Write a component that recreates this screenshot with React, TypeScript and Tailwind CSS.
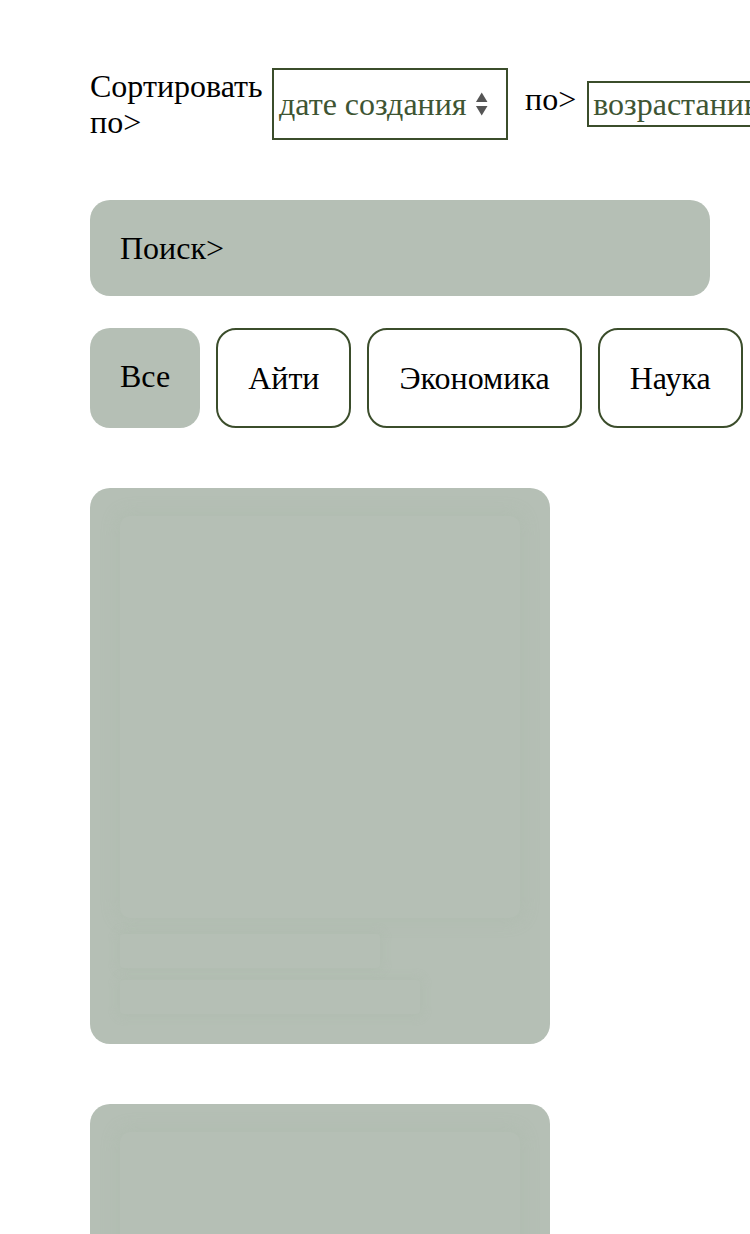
import React from "react";

function Card() {
  return (
    <div className="w-[460px] h-[556px] rounded-[20px] bg-[#b5bfb5] px-[30px] pt-[28px] flex flex-col">
      <div className="h-[402px] w-full rounded-[10px] bg-[#b5bfb5] shadow-[0_0_16px_4px_rgba(165,182,163,0.22)]" />
      <div className="mt-[16px] h-[34px] w-[260px] rounded-[4px] bg-[#b5bfb5] shadow-[0_0_10px_3px_rgba(165,182,163,0.22)]" />
      <div className="mt-[12px] h-[34px] w-[300px] rounded-[4px] bg-[#b5bfb5] shadow-[0_0_10px_3px_rgba(165,182,163,0.22)]" />
    </div>
  );
}

export default function App() {
  const chips = ["Айти", "Экономика", "Наука"];
  return (
    <div className="w-[750px] min-h-[1234px] overflow-hidden bg-white text-black font-['Liberation_Serif',serif]">
      <div className="pl-[90px] pt-[68px]">
        <div className="flex items-center whitespace-nowrap text-[32px] leading-[36px]">
          <div className="w-[172px] whitespace-normal">Сортировать по&gt;</div>
          <div className="ml-[10px] flex h-[72px] w-[236px] shrink-0 items-center border-2 border-[#3b4d2b] pl-[5px] pr-[18px] text-[#3e5533]">
            <span>дате создания</span>
            <svg className="ml-[8px]" width="14" height="26" viewBox="0 0 14 26">
              <path d="M7 1 L13 11 L1 11 Z" fill="#555" />
              <path d="M1 15 L13 15 L7 25 Z" fill="#555" />
            </svg>
          </div>
          <div className="ml-[17px] self-center -mt-[10px]">по&gt;</div>
          <div className="ml-[11px] flex h-[46px] shrink-0 items-center border-2 border-[#3b4d2b] pl-[4px] pr-[18px] text-[#3e5533]">
            <span>возрастанию</span>
          </div>
        </div>

        <div className="mt-[60px] flex h-[96px] w-[620px] items-center rounded-[20px] bg-[#b5bfb5] px-[30px] text-[32px]">
          Поиск&gt;
        </div>

        <div className="mt-[32px] flex gap-[16px] text-[32px] whitespace-nowrap">
          <div className="flex h-[100px] items-center rounded-[20px] bg-[#b5bfb5] px-[30px] pb-[4px]">Все</div>
          {chips.map((c) => (
            <div
              key={c}
              className="flex h-[100px] shrink-0 items-center rounded-[20px] border-2 border-[#3b4d2b] bg-white px-[30px]"
            >
              {c}
            </div>
          ))}
        </div>

        <div className="mt-[60px] flex flex-col gap-[60px]">
          <Card />
          <Card />
        </div>
      </div>
    </div>
  );
}
